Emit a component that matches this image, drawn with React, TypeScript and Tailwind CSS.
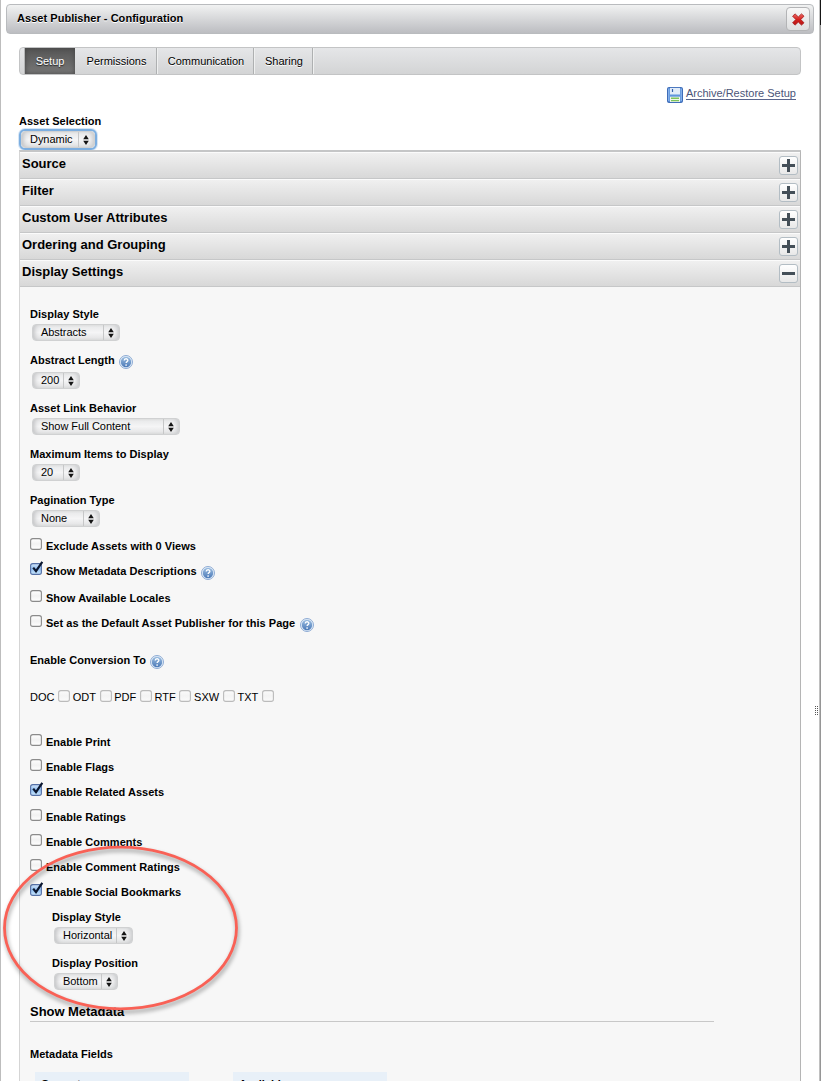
import React from "react";

const tabs = [
  { name: "Permissions", cls: "w-[82px]" },
  { name: "Communication", cls: "w-[97px]" },
  { name: "Sharing", cls: "w-[59px]" },
];

const sections = [
  { name: "Source", open: false },
  { name: "Filter", open: false },
  { name: "Custom User Attributes", open: false },
  { name: "Ordering and Grouping", open: false },
  { name: "Display Settings", open: true },
];

function Label({ children, className = "" }: { children: React.ReactNode; className?: string }) {
  return (
    <div className={`flex h-4 items-center whitespace-nowrap font-bold leading-4 tracking-[0.03px] ${className}`}>
      {children}
    </div>
  );
}

function Select({ value, className }: { value: string; className: string }) {
  return (
    <div
      className={`flex h-[17px] items-stretch rounded-[4px] border border-[#d0d1d2] bg-linear-to-b from-[#e6e7e8] via-[#f5f5f6] to-[#e1e2e3] shadow-[inset_4px_0_4px_-2px_#c3c4c6,inset_-4px_0_4px_-2px_#cacbcd] ${className}`}
    >
      <span className="flex-1 whitespace-nowrap pl-2 leading-[15px] tracking-[-0.04px]">{value}</span>
      <span className="flex w-4 items-center justify-center border-l border-[#c6c7c8] pr-px">
        <svg width="6" height="10" viewBox="0 0 6 10">
          <path d="M3 0 5.8 4.2H.2ZM3 10 5.8 5.8H.2Z" fill="#151515" />
        </svg>
      </span>
    </div>
  );
}

function Check({ on = false, dim = false }: { on?: boolean; dim?: boolean }) {
  return (
    <svg width="14" height="15" viewBox="0 0 14 15" className={`-mt-[3px] mr-[2px] shrink-0 ${dim ? "opacity-55" : ""}`}>
      <defs>
        <linearGradient id="box-off" x2="0" y2="1">
          <stop stopColor="#fff" />
          <stop offset=".5" stopColor="#f2f2f2" />
          <stop offset="1" stopColor="#fff" />
        </linearGradient>
        <linearGradient id="box-on" x2="0" y2="1">
          <stop stopColor="#d3e6fa" />
          <stop offset=".5" stopColor="#8fbdf0" />
          <stop offset="1" stopColor="#cdeaff" />
        </linearGradient>
      </defs>
      <rect x=".6" y="3.6" width="10.8" height="10.8" rx="2.2" fill={on ? "url(#box-on)" : "url(#box-off)"} stroke={on ? "#5570a6" : "#8b8b8b"} strokeWidth="1.1" />
      {on && <path d="M3.2 7.6 6 11.2 12.3 1.8" fill="none" stroke="#0b1730" strokeWidth="2.2" />}
    </svg>
  );
}

function Help() {
  return (
    <svg width="14" height="14" viewBox="0 0 14 14" className="relative top-[2px] ml-[4.5px] shrink-0">
      <defs>
        <linearGradient id="help" x2="0" y2="1">
          <stop stopColor="#9bbde0" />
          <stop offset="1" stopColor="#4c7ab8" />
        </linearGradient>
      </defs>
      <circle cx="7" cy="7" r="6.5" fill="#e3eef9" stroke="#83a3cf" strokeWidth=".9" />
      <circle cx="7" cy="7" r="5.2" fill="url(#help)" />
      <path d="M5.2 5.6c0-2.5 3.7-2.3 3.7-.3 0 1.4-1.8 1.2-1.8 2.7" fill="none" stroke="#fff" strokeWidth="1.3" />
      <circle cx="7.1" cy="10" r=".85" fill="#fff" />
    </svg>
  );
}

function CheckRow({ label, on, help, className = "" }: { label: string; on?: boolean; help?: boolean; className?: string }) {
  return (
    <div className={`flex h-4 items-start ${className}`}>
      <Check on={on} />
      <Label>
        {label}
        {help && <Help />}
      </Label>
    </div>
  );
}

export default function App() {
  return (
    <div
      className="relative flex h-[1081px] w-[821px] overflow-hidden border-l border-[#bdbdbd] bg-white text-[11px] text-black"
      style={{ fontFamily: '"Liberation Sans", Arial, sans-serif' }}
    >
      <div className="flex w-[818px] shrink-0 flex-col">
        <header className="ml-[5px] mt-1 flex h-[30px] w-[808px] shrink-0 items-center justify-between rounded-[4px] border border-[#b9bbbe] bg-linear-to-b from-[#f1f2f2] to-[#bcbdc1] pl-[10px] pr-[3px]">
          <h1 className="pb-px font-bold tracking-[0.04px] [text-shadow:0_1px_0_#fff]">Asset Publisher - Configuration</h1>
          <button className="flex h-6 w-6 items-center justify-center rounded-[4px] border border-[#b3b4b6] bg-linear-to-b from-[#f7f7f7] to-[#dedfe0]">
            <svg width="13" height="13" viewBox="0 0 13 13">
              <defs>
                <linearGradient id="cross" x2="0" y2="1">
                  <stop stopColor="#ee6761" />
                  <stop offset=".5" stopColor="#d4221f" />
                  <stop offset="1" stopColor="#b71414" />
                </linearGradient>
              </defs>
              <path d="M3.1.9 6.3 3.9 9.5.9 12 3.2 8.8 6.5 12 9.8 9.5 12.1 6.3 9.1 3.1 12.1.6 9.8 3.8 6.5.6 3.2Z" fill="url(#cross)" stroke="#a51718" strokeWidth=".8" strokeLinejoin="round" />
            </svg>
          </button>
        </header>

        <main className="ml-[18px] mt-[13px] w-[782px] shrink-0">
          <nav className="flex h-7 rounded-[4px] border border-[#c3c4c5] bg-linear-to-b from-[#e5e6e8] to-[#d3d4d5] pl-1 leading-[26px]">
            <div className="w-[51px] border-l border-[#b5b6b7] bg-linear-to-b from-[#555] to-[#787878] text-center text-white shadow-[inset_0_0_5px_#444] [text-shadow:0_1px_1px_#222]">Setup</div>
            {tabs.map((t) => (
              <div key={t.name} className={`border-r border-[#aeb0b1] pl-[2px] text-center shadow-[1px_0_0_#eff0f0] [text-shadow:0_1px_0_#fff] ${t.cls}`}>
                {t.name}
              </div>
            ))}
          </nav>

          <div className="mt-3 flex h-4 items-start justify-end pr-[5px]">
            <svg width="16" height="16" viewBox="0 0 16 16" className="mr-[3px]">
              <rect x=".6" y=".6" width="14.8" height="14.8" rx="1.5" fill="#5f95dd" stroke="#3f6db8" strokeWidth="1.2" />
              <path d="M1.7 1.5v12.5M14.3 1.5v12.5" stroke="#8fb8ee" />
              <path d="M3 .9h10v6.6H3Z" fill="#e1ecf9" />
              <path d="M5.5 2v3" stroke="#3261ad" strokeWidth="1.2" />
              <path d="M3 9.7h10V15H3Z" fill="#f1f6ee" />
              <path d="M4 11.2h8M4 13.6h8" stroke="#7cc45b" strokeWidth="1.4" />
            </svg>
            <a className="h-[13px] border-b border-[#59658c] leading-[13px] text-[#4b5578]">Archive/Restore Setup</a>
          </div>

          <Label className="mt-[10px]">Asset Selection</Label>
          <Select value="Dynamic" className="ml-[2px] mt-[2px] w-[74px] outline-[2px] outline-[#7caee0] ring-[3px] ring-[#b8d4f0]/60" />

          <div className="mt-[2px] border-x border-t-2 border-l-[#d5d5d5] border-r-[#b5b5b5] border-t-[#c5c6c7] bg-[#f7f7f7]">
            {sections.map((s) => (
              <div key={s.name} className="flex h-[27px] items-center justify-between border-b border-t border-b-[#c6c7c8] border-t-[#fbfbfb] bg-linear-to-b from-[#f0f0f0] to-[#d8d8d8] pl-[2px] pr-[2px]">
                <h2 className="pb-[3px] text-[13px] font-bold leading-4">{s.name}</h2>
                <span className="flex h-[19px] w-[19px] items-center justify-center rounded-[3px] border border-[#b3bdc4] bg-linear-to-b from-white to-[#e8e8e8]">
                  <svg width="13" height="15" viewBox="0 0 13 15">
                    <path d={s.open ? "M0 6h13v3H0Z" : "M0 6h5V1h3v5h5v3H8v5H5V9H0Z"} fill="#444f58" />
                  </svg>
                </span>
              </div>
            ))}

            <div className="h-[794px] pl-[10px] pt-[19px]">
              <Label>Display Style</Label>
              <Select value="Abstracts" className="ml-[2px] mt-[2px] w-[88px]" />
              <Label className="mt-[11px]">Abstract Length<Help /></Label>
              <Select value="200" className="ml-[2px] mt-1 w-12" />
              <Label className="mt-[11px]">Asset Link Behavior</Label>
              <Select value="Show Full Content" className="ml-[2px] mt-[2px] w-[148px]" />
              <Label className="mt-[11px]">Maximum Items to Display</Label>
              <Select value="20" className="ml-[2px] mt-[2px] w-12" />
              <Label className="mt-[11px]">Pagination Type</Label>
              <Select value="None" className="ml-[2px] mt-[2px] w-[68px]" />

              <CheckRow label="Exclude Assets with 0 Views" className="mt-[11px]" />
              <CheckRow label="Show Metadata Descriptions" on help className="mt-[9px]" />
              <CheckRow label="Show Available Locales" className="mt-[11px]" />
              <CheckRow label="Set as the Default Asset Publisher for this Page" help className="mt-[9px]" />

              <Label className="mt-[21px]">Enable Conversion To<Help /></Label>
              <div className="mt-[21px] flex h-4 leading-4">
                {["DOC", "ODT", "PDF", "RTF", "SXW", "TXT"].map((f) => (
                  <span key={f} className="-mr-[1.3px] flex">
                    <span className="mr-[3.6px]">{f}</span>
                    <span className="mt-px h-3.5"><Check dim /></span>
                  </span>
                ))}
              </div>

              <CheckRow label="Enable Print" className="mt-[29px]" />
              <CheckRow label="Enable Flags" className="mt-[9px]" />
              <CheckRow label="Enable Related Assets" on className="mt-[9px]" />
              <CheckRow label="Enable Ratings" className="mt-[9px]" />
              <CheckRow label="Enable Comments" className="mt-[9px]" />
              <CheckRow label="Enable Comment Ratings" className="mt-[9px]" />
              <CheckRow label="Enable Social Bookmarks" on className="mt-[9px]" />

              <div className="pl-[22px]">
                <Label className="mt-[9px]">Display Style</Label>
                <Select value="Horizontal" className="ml-[2px] mt-[2px] w-[79px]" />
                <Label className="mt-[11px]">Display Position</Label>
                <Select value="Bottom" className="ml-[2px] mt-[2px] w-16" />
              </div>

              <h3 className="mt-[13px] h-[19px] w-[684px] border-b border-[#c8c8c8] text-[13px] font-bold leading-[17px] tracking-[-0.04px]">Show Metadata</h3>
              <Label className="mt-6">Metadata Fields</Label>
              <div className="ml-[5px] mt-[10px] flex gap-11 font-bold leading-4">
                <div className="h-[30px] w-[154px] bg-[#e8f0f8] pl-[6px] pt-1">Current</div>
                <div className="h-[30px] w-[154px] bg-[#e8f0f8] pl-[6px] pt-1">Available</div>
              </div>
            </div>
          </div>
        </main>
      </div>

      <div className="flex w-[2px] shrink-0 flex-col border-l border-[#c0c0c0] bg-[#969696]">
        <div className="h-[25px] bg-[#151515]" />
      </div>

      <svg className="absolute left-[813px] top-[705px]" width="5" height="11" viewBox="0 0 5 11">
        <path d="M1.5 1v10M3.5 1v10" stroke="#555" strokeWidth="1" strokeDasharray="1 1" />
      </svg>
      <svg className="absolute left-0 top-[840px] drop-shadow-[1px_3px_2px_rgba(0,0,0,0.4)]" width="245" height="180" viewBox="0 0 245 180">
        <ellipse cx="119.5" cy="88" rx="116" ry="80.8" fill="none" stroke="#f96156" strokeWidth="2.8" />
      </svg>
    </div>
  );
}
